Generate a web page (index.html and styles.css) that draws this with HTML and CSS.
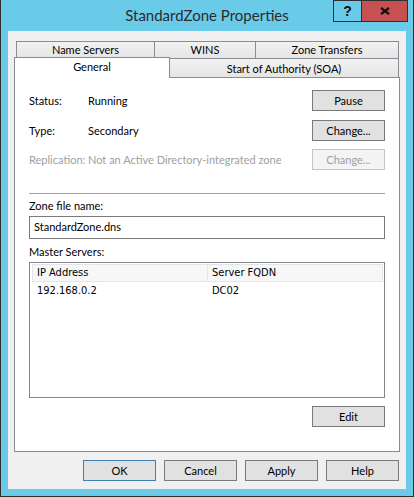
FILE: index.html
```html
<!DOCTYPE html>
<html lang="en">
<head>
    <meta charset="UTF-8">
    <meta name="viewport" content="width=device-width, initial-scale=1.0">
    <title>StandardZone Properties</title>
    <link rel="stylesheet" href="styles.css">
</head>
<body>
    <div class="window" role="dialog" aria-label="StandardZone Properties">
        <div class="titlebar">
            <div class="title">StandardZone Properties</div>
            <div class="caption-buttons">
                <button class="caption-btn caption-btn--help" aria-label="Help">?</button>
                <button class="caption-btn caption-btn--close" aria-label="Close">
                    <svg width="10" height="8" viewBox="0 0 10 8" aria-hidden="true">
                        <path d="M1 0.8 L9 7.2 M9 0.8 L1 7.2" stroke="#111" stroke-width="2.2" fill="none"/>
                    </svg>
                </button>
            </div>
        </div>

        <div class="client">
            <div class="tabs">
                <div class="tab-row tab-row--back">
                    <div class="tab tab--ns">Name Servers</div>
                    <div class="tab tab--wins">WINS</div>
                    <div class="tab tab--zt">Zone Transfers</div>
                </div>
                <div class="tab-row tab-row--front">
                    <div class="tab tab--general tab--active">General</div>
                    <div class="tab tab--soa">Start of Authority (SOA)</div>
                </div>
            </div>

            <div class="panel">
                <div class="field-row">
                    <span class="field-label">Status:</span>
                    <span class="field-value">Running</span>
                    <button class="btn">Pause</button>
                </div>
                <div class="field-row field-row--type">
                    <span class="field-label">Type:</span>
                    <span class="field-value">Secondary</span>
                    <button class="btn">Change...</button>
                </div>
                <div class="field-row field-row--disabled">
                    <span class="field-label">Replication:</span>
                    <span class="field-value">Not an Active Directory-integrated zone</span>
                    <button class="btn" disabled>Change...</button>
                </div>

                <div class="separator"></div>

                <div class="caption">Zone file name:</div>
                <div class="textbox">StandardZone.dns</div>

                <div class="caption caption--list">Master Servers:</div>
                <div class="listview">
                    <div class="lv-header">
                        <div class="lv-col lv-col--ip">IP Address</div>
                        <div class="lv-col">Server FQDN</div>
                    </div>
                    <div class="lv-row">
                        <div class="lv-cell lv-col--ip">192.168.0.2</div>
                        <div class="lv-cell">DC02</div>
                    </div>
                </div>

                <div class="panel-actions">
                    <button class="btn">Edit</button>
                </div>
            </div>

            <div class="dialog-buttons">
                <button class="btn btn--default">OK</button>
                <button class="btn">Cancel</button>
                <button class="btn">Apply</button>
                <button class="btn">Help</button>
            </div>
        </div>
    </div>
</body>
</html>
```

FILE: styles.css
```css
/* Reset */
* {
    margin: 0;
    padding: 0;
    box-sizing: border-box;
}
body {
    font-family: "Segoe UI", Lato, sans-serif;
    font-size: 11px;
    color: #000;
    background: #fff;
}
.window {
    width: 414px;
    height: 497px;
    background-color: #6acbe9;
    border: 1px solid #2f2f2f;
    border-top: none;
    display: flex;
    flex-direction: column;
}

/* Title bar */
.titlebar {
    position: relative;
    height: 31px;
    flex-shrink: 0;
}
.title {
    font-size: 15px;
    line-height: 31px;
    text-align: center;
    color: #2b2b2b;
}
.caption-buttons {
    position: absolute;
    top: 0;
    right: 5px;
    display: flex;
}
.caption-btn {
    height: 22px;
    border: 1px solid #2f2f2f;
    display: flex;
    align-items: center;
    justify-content: center;
    font-family: "Liberation Sans", Arial, sans-serif;
}
.caption-btn--help {
    width: 28px;
    border-right: none;
    background-color: #6acbe9;
    font-size: 14px;
    font-weight: bold;
    color: #111;
}
.caption-btn--close {
    width: 47px;
    background-color: #c75050;
}

/* Client area */
.client {
    flex: 1;
    margin: 0 7px 7px;
    background-color: #f0f0f0;
    padding: 10px 6px 0;
}

/* Tabs */
.tab-row {
    display: flex;
}
.tab-row--back {
    padding-left: 2px;
    height: 16px;
}
.tab-row--front {
    height: 20px;
    align-items: flex-end;
}
.tab {
    border: 1px solid #898c95;
    border-bottom: none;
    background: linear-gradient(#f2f2f2, #e5e5e5);
    text-align: center;
    white-space: nowrap;
}
.tab-row--back .tab {
    height: 17px;
    line-height: 16px;
}
.tab--ns { width: 139px; }
.tab--wins { width: 102px; margin-left: -1px; }
.tab--zt { width: 144px; margin-left: -1px; }
.tab--general {
    width: 156px;
    height: 21px;
    margin-bottom: -1px;
    line-height: 17px;
    position: relative;
    z-index: 1;
}
.tab--active {
    background: #fff;
}
.tab--soa {
    width: 230px;
    height: 19px;
    margin-left: -1px;
    line-height: 19px;
}

/* Panel */
.panel {
    height: 375px;
    background-color: #fff;
    border: 1px solid #898c95;
    padding: 12px 14px 0;
}
.field-row {
    display: flex;
    align-items: center;
    height: 21px;
}
.field-row + .field-row {
    margin-top: 8px;
}
.field-row--type {
    margin-top: 9px !important;
}
.field-label {
    width: 59px;
    white-space: nowrap;
}
.field-value {
    flex: 1;
    white-space: nowrap;
}
.field-row--disabled {
    color: #a0a0a0;
}
.separator {
    height: 1px;
    background-color: #a0a0a0;
    margin-top: 23px;
}
.caption {
    line-height: 15px;
    margin-top: 4px;
}
.caption--list {
    margin-top: 5px;
}
.textbox {
    height: 23px;
    margin-top: 3px;
    border: 1px solid #7a7a7a;
    padding-left: 4px;
    line-height: 20px;
}
.listview {
    height: 136px;
    margin-top: 3px;
    border: 1px solid #828790;
    padding: 1px 1px 0 2px;
    font-family: "DejaVu Sans Condensed", "Liberation Sans", sans-serif;
    font-size: 11px;
}
.lv-header {
    display: flex;
    height: 18px;
    background-color: #f7f7f7;
    border: 1px solid #e5e5e5;
}
.lv-col {
    padding-left: 4px;
    line-height: 16px;
}
.lv-col--ip {
    width: 175px;
    border-right: 1px solid #e5e5e5;
}
.lv-row {
    display: flex;
    height: 17px;
}
.lv-cell {
    padding-left: 5px;
    line-height: 17px;
}
.lv-row .lv-col--ip {
    border-right: none;
}

.panel-actions {
    display: flex;
    justify-content: flex-end;
    margin-top: 8px;
}

/* Buttons */
.btn {
    width: 73px;
    height: 21px;
    font-family: inherit;
    font-size: 11px;
    color: #000;
    background-color: #e1e1e1;
    border: 1px solid #7a7a7a;
}
.btn:disabled {
    color: #a0a0a0;
    background-color: #f4f4f4;
    border-color: #c4c4c4;
}
.btn--default {
    border-color: #3c7fb1;
}
.dialog-buttons {
    display: flex;
    justify-content: flex-end;
    gap: 8px;
    margin-top: 8px;
    padding-right: 1px;
}
```
